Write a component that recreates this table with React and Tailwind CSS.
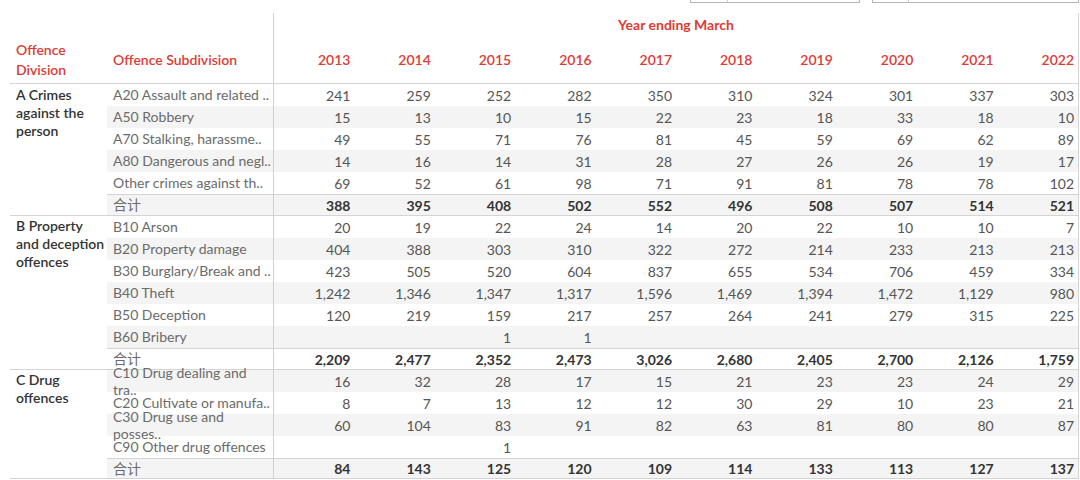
import React from "react";

const years = [2013, 2014, 2015, 2016, 2017, 2018, 2019, 2020, 2021, 2022];

const groups = [
  {
    name: ["A Crimes", "against the", "person"],
    pad: "pt-[2px]",
    rows: [
      { label: ["A20 Assault and related .."], v: ["241", "259", "252", "282", "350", "310", "324", "301", "337", "303"] },
      { label: ["A50 Robbery"], v: ["15", "13", "10", "15", "22", "23", "18", "33", "18", "10"] },
      { label: ["A70 Stalking, harassme.."], v: ["49", "55", "71", "76", "81", "45", "59", "69", "62", "89"] },
      { label: ["A80 Dangerous and negl.."], v: ["14", "16", "14", "31", "28", "27", "26", "26", "19", "17"] },
      { label: ["Other crimes against th.."], v: ["69", "52", "61", "98", "71", "91", "81", "78", "78", "102"] },
      { label: ["合计"], total: true, v: ["388", "395", "408", "502", "552", "496", "508", "507", "514", "521"] },
    ],
  },
  {
    name: ["B Property", "and deception", "offences"],
    pad: "pt-[1px]",
    rows: [
      { label: ["B10 Arson"], v: ["20", "19", "22", "24", "14", "20", "22", "10", "10", "7"] },
      { label: ["B20 Property damage"], v: ["404", "388", "303", "310", "322", "272", "214", "233", "213", "213"] },
      { label: ["B30 Burglary/Break and .."], v: ["423", "505", "520", "604", "837", "655", "534", "706", "459", "334"] },
      { label: ["B40 Theft"], v: ["1,242", "1,346", "1,347", "1,317", "1,596", "1,469", "1,394", "1,472", "1,129", "980"] },
      { label: ["B50 Deception"], v: ["120", "219", "159", "217", "257", "264", "241", "279", "315", "225"] },
      { label: ["B60 Bribery"], v: ["", "", "1", "1", "", "", "", "", "", ""] },
      { label: ["合计"], total: true, v: ["2,209", "2,477", "2,352", "2,473", "3,026", "2,680", "2,405", "2,700", "2,126", "1,759"] },
    ],
  },
  {
    name: ["C Drug", "offences"],
    pad: "pt-[1px]",
    rows: [
      { label: ["C10 Drug dealing and", "tra.."], v: ["16", "32", "28", "17", "15", "21", "23", "23", "24", "29"] },
      { label: ["C20 Cultivate or manufa.."], v: ["8", "7", "13", "12", "12", "30", "29", "10", "23", "21"] },
      { label: ["C30 Drug use and", "posses.."], v: ["60", "104", "83", "91", "82", "63", "81", "80", "80", "87"] },
      { label: ["C90 Other drug offences"], v: ["", "", "1", "", "", "", "", "", "", ""] },
      { label: ["合计"], total: true, v: ["84", "143", "125", "120", "109", "114", "133", "113", "127", "137"] },
    ],
  },
];

const font = { fontFamily: "Lato, 'Noto Sans CJK SC', sans-serif" };

export default function App() {
  let idx = 0;
  return (
    <div className="w-[1080px] h-[480px] overflow-hidden bg-white text-[14px]" style={font}>
      {/* top filter boxes */}
      <div className="flex h-[3px] pl-[690px]">
        <div className="w-[170px] h-[3px] border-x border-b border-[#b4b4b4]">
          <div className="ml-[36px] w-px h-[2px] bg-[#d0d0d0]" />
        </div>
        <div className="ml-[12px] w-[207px] h-[3px] border-x border-b border-[#b4b4b4]">
          <div className="ml-[35px] w-px h-[2px] bg-[#d0d0d0]" />
        </div>
      </div>

      <div className="ml-[10px] mt-[10px] w-[1069px] border-r border-[#d4d4d4]">
        {/* header */}
        <div className="flex h-[71px] border-b border-[#d6d6d6]">
          <div className="w-[97px] pl-[6px] pt-[27px] leading-[20px] font-semibold text-[#dc3b35]">
            <div>Offence</div>
            <div>Division</div>
          </div>
          <div className="w-[167px] border-r border-[#d0d0d0] pl-[6px] pt-[37px] leading-[20px] font-semibold text-[#dc3b35]">
            Offence Subdivision
          </div>
          <div className="flex-1 flex flex-col">
            <div className="h-[24px] leading-[24px] text-center font-bold text-[#dc3b35]">Year ending March</div>
            <div className="flex pt-[13px] leading-[20px]">
              {years.map((y) => (
                <div key={y} className="flex-1 text-right pr-[4px] font-semibold text-[#dc3b35]">
                  {y}
                </div>
              ))}
            </div>
          </div>
        </div>

        {/* body */}
        {groups.map((g, gi) => (
          <div key={gi} className="flex">
            <div className={`w-[97px] pl-[6px] ${g.pad} leading-[18px] font-semibold text-[#333] whitespace-nowrap border-b border-[#d4d4d4]`}>
              {g.name.map((n) => (
                <div key={n}>{n}</div>
              ))}
            </div>
            <div className="flex-1">
              {g.rows.map((r, ri) => {
                const i = idx++;
                const last = ri === g.rows.length - 1;
                const isFinal = gi === groups.length - 1 && last;
                const bg = i % 2 === 1 ? "bg-[#f4f4f4]" : "bg-white";
                return (
                  <div
                    key={ri}
                    className={`flex ${isFinal ? "h-[21px]" : "h-[22px]"} ${bg} ${r.total ? "border-t border-[#d4d4d4]" : ""} ${last ? "border-b border-[#d4d4d4]" : ""}`}
                  >
                    <div className="w-[167px] border-r border-[#d0d0d0] pl-[6px] flex flex-col justify-center text-[#6b6b6b] whitespace-nowrap overflow-visible">
                      {r.label.map((l, li) => (
                        <div key={li} className={r.label.length > 1 ? "leading-[17px]" : "leading-[18px]"}>
                          {l}
                        </div>
                      ))}
                    </div>
                    {r.v.map((v, vi) => (
                      <div
                        key={vi}
                        className={`flex-1 flex items-center justify-end pr-[4px] ${r.total ? "font-bold text-[#333]" : "text-[#555]"}`}
                      >
                        {v}
                      </div>
                    ))}
                  </div>
                );
              })}
            </div>
          </div>
        ))}
      </div>
    </div>
  );
}
